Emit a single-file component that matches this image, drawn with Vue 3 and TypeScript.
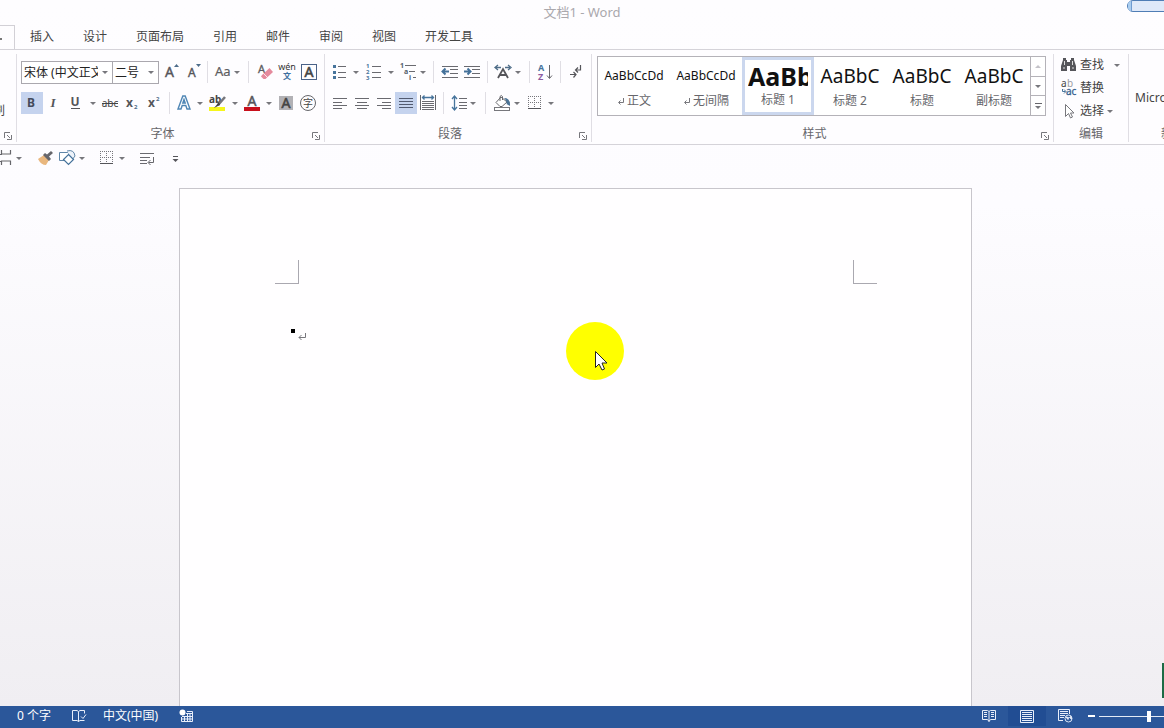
<script setup lang="ts">
import { ref } from 'vue'

interface Item {
  kind: 'button' | 'arrow' | 'sep' | 'gap'
  w: number
  icon?: string
  label?: string
  active?: boolean
}

const b = (icon: string, w: number, label: string, active = false): Item => ({ kind: 'button', icon, w, label, active })
const arrow = (w: number): Item => ({ kind: 'arrow', w, label: '更多选项' })
const sep = (w: number): Item => ({ kind: 'sep', w })
const gap = (w: number): Item => ({ kind: 'gap', w })

const ui = 'font-family="Noto Sans, Noto Sans CJK SC, sans-serif"'
const lines = (rows: number[][], color = '#6a6a70') =>
  rows.map(([x, y, w]) => `<path d="M${x} ${y}.5h${w}" stroke="${color}"/>`).join('')

const dots = (x: number, y: number) => {
  let out = `<path d="M${x} ${y + 12}.5h13" stroke="#55555a"/>`
  for (const o of [0, 6, 12]) {
    out += `<path d="M${x + o}.5 ${y}v12" stroke="#77777c" stroke-dasharray="1 1"/>`
    if (o < 12) out += `<path d="M${x} ${y + o}.5h13" stroke="#77777c" stroke-dasharray="1 1"/>`
  }
  return out
}

const icons: Record<string, string> = {
  grow: `<text x="5" y="16" font-size="14" fill="#55555a" stroke="#55555a" stroke-width=".4" ${ui}>A</text><path d="M14 6l2.500-3 2.500 3z" fill="#4d6c8a"/>`,
  shrink: `<text x="6" y="16" font-size="12" fill="#55555a" stroke="#55555a" stroke-width=".4" ${ui}>A</text><path d="M14 3h5l-2.500 3z" fill="#4d6c8a"/>`,
  casing: `<text x="4" y="15" font-size="13" fill="#5c5c60" stroke="#5c5c60" stroke-width=".2" ${ui}>Aa</text>`,
  eraser: `<text x="4" y="12" font-size="11" fill="#5c5c60" stroke="#5c5c60" stroke-width=".3" ${ui}>A</text><path d="M8 14l7.500-7 3.500 4-7.500 7h-2l-2.500-2.500z" fill="#e58a9d"/><path d="M9.500 12.500l4 4" stroke="#fff" stroke-width=".8"/>`,
  phonetic: `<text x="11" y="9" font-size="9" text-anchor="middle" fill="#333" ${ui}>wén</text><text x="11" y="18" font-size="8" font-weight="700" text-anchor="middle" fill="#3d6f9f" ${ui}>文</text>`,
  charBorder: `<rect x="3.500" y="3.500" width="15" height="15" fill="none" stroke="#4a6288"/><text x="11" y="16" font-size="14" text-anchor="middle" fill="#444" stroke="#444" stroke-width=".6" ${ui}>A</text>`,
  bold: `<text x="10" y="15" font-size="12" font-weight="700" text-anchor="middle" fill="#444b5c" ${ui}>B</text>`,
  italic: `<text x="10" y="15" font-size="13" font-style="italic" font-weight="700" text-anchor="middle" fill="#55555a" font-family="Liberation Serif, serif">I</text>`,
  underline: `<text x="10" y="14" font-size="12" font-weight="700" text-anchor="middle" fill="#55555a" ${ui}>U</text><path d="M6 16.500h9" stroke="#55555a"/>`,
  strike: `<text x="11" y="15" font-size="10" text-anchor="middle" fill="#444" ${ui}>abc</text><path d="M3 11.500h16" stroke="#444"/>`,
  sub: `<text x="5" y="15" font-size="12" font-weight="700" fill="#55555a" ${ui}>x</text><text x="13" y="17" font-size="6" font-weight="700" fill="#4d6c8a" ${ui}>2</text>`,
  sup: `<text x="5" y="15" font-size="12" font-weight="700" fill="#55555a" ${ui}>x</text><text x="13" y="9" font-size="6" font-weight="700" fill="#4d6c8a" ${ui}>2</text>`,
  effect: `<path d="M5 17l4.800-13h2.400l4.800 13h-3l-1.200-3.500h-3.600l-1.200 3.500zM9.800 11h2.400l-1.200-3.600z" fill="#fff" stroke="#4f86b5" stroke-width="1.400"/>`,
  highlight: `<rect x="3" y="15" width="16" height="4" fill="#f6f61c"/><text x="3" y="11" font-size="10" font-weight="700" fill="#444" ${ui}>ab</text><path d="M19 5l-7 8" stroke="#77777c" stroke-width="2.500"/><path d="M13 10l-5 6 6-3z" fill="#444"/>`,
  fontColor: `<text x="11" y="14" font-size="14" text-anchor="middle" fill="#55555a" stroke="#55555a" stroke-width=".5" ${ui}>A</text><rect x="3" y="15" width="16" height="4" fill="#c8101c"/>`,
  shade: `<rect x="4" y="4" width="14" height="14" fill="#b2b1b5"/><text x="11" y="16" font-size="14" text-anchor="middle" fill="#444" stroke="#444" stroke-width=".6" ${ui}>A</text>`,
  enclose: `<circle cx="11" cy="11" r="7.500" fill="none" stroke="#66666b"/><text x="11" y="15" font-size="10" text-anchor="middle" fill="#444" ${ui}>字</text>`,
  bullets: lines([[9, 5, 8], [9, 11, 8], [9, 16, 8]]) + '<path d="M4 4h3v3h-3zM4 10h3v3h-3zM4 15h3v3h-3z" fill="#47749c"/>',
  numbers: lines([[9, 5, 9], [9, 11, 9], [9, 16, 9]]) + `<g font-size="6" font-weight="700" fill="#47749c" ${ui}><text x="3" y="7">1</text><text x="3" y="13">2</text><text x="3" y="19">3</text></g>`,
  multi: lines([[9, 4, 11], [13, 10, 6], [17, 16, 3]]) + `<g font-size="7" font-weight="700" fill="#55606c" ${ui}><text x="4" y="7">1</text><text x="8" y="13">a</text><text x="13" y="19">i</text></g>`,
  outdent: lines([[3, 5, 16], [11, 8, 8], [11, 12, 8], [3, 16, 16]]) + '<path d="M3 10.500h7M6.500 7.500l-3 3 3 3" fill="none" stroke="#44719a" stroke-width="2"/>',
  indent: lines([[3, 5, 16], [11, 8, 8], [11, 12, 8], [3, 16, 16]]) + '<path d="M3 10.500h6M6.500 7.500l3 3-3 3" fill="none" stroke="#44719a" stroke-width="2"/>',
  asian: `<path d="M6 17l5-9 5 9M8 14h6" fill="none" stroke="#55555a" stroke-width="1.800"/><path d="M4 6.500h5M6 4l-3 2.500 3 2.500M13 6.500h5M16 4l3 2.500-3 2.500" fill="none" stroke="#4f6d88" stroke-width="1.300"/>`,
  sort: `<text x="4" y="10" font-size="9" font-weight="700" fill="#47749c" ${ui}>A</text><text x="4" y="19" font-size="9" font-weight="700" fill="#8b5aa0" ${ui}>Z</text><path d="M15.500 4v13M13 14.500l2.500 3 2.500-3" fill="none" stroke="#66666b"/>`,
  marks: '<path d="M15.500 4v5h-5M13 6.500l-2.500 2.500 2.500 2.500M5 13.500h6M8.500 11l2.500 2.500-2.500 3" fill="none" stroke="#55555a" stroke-width="1.200"/>',
  left: lines([[4, 6, 14], [4, 10, 9], [4, 13, 14], [4, 16, 9]]),
  center: lines([[4, 6, 14], [6, 10, 10], [4, 13, 14], [6, 16, 10]]),
  right: lines([[4, 6, 14], [9, 10, 9], [4, 13, 14], [9, 16, 9]]),
  justify: lines([[4, 6, 14], [4, 9, 14], [4, 12, 14], [4, 15, 14]], '#525a70'),
  distribute: lines([[5, 9, 12], [5, 11, 12], [5, 13, 12], [5, 15, 12], [5, 17, 12]]) + '<path d="M3.500 3v15M18.500 3v15" stroke="#66666b"/><path d="M5 5.500h12M7.500 3.500l-2 2 2 2M14.500 3.500l2 2-2 2" fill="none" stroke="#47749c" stroke-width="1.300"/>',
  spacing: lines([[11, 6, 8], [11, 10, 8], [11, 13, 8], [11, 16, 8]]) + '<path d="M6.500 4.500v13M4 7l2.500-3 2.500 3M4 15l2.500 3 2.500-3" fill="none" stroke="#47749c" stroke-width="1.300"/>',
  fill: '<rect x="2.500" y="15.500" width="15" height="3" fill="#fff" stroke="#77777c"/><path d="M9 5l6 5-5 4.500h-2l-4-4z" fill="#fff" stroke="#66666b"/><path d="M8 9V4.500q1.500-2 2.500 0V8" fill="none" stroke="#66666b"/><path d="M12 6q6.500 0 6 8l-3.500-2q1-3-2.500-6z" fill="#4b7395"/>',
  borders: dots(5, 4),
  find: '<path d="M5 4h3v2h1v2h3V6h1V4h3v2l2 6v5h-6v-5h-3v5H3v-5l2-6z" fill="#55555a"/><path d="M6.500 7v4M14.500 7v4M5 14h2M14 14h2" stroke="#ddd"/>',
  replace: `<g font-size="10" ${ui}><text x="3" y="10" fill="#444">a</text><text x="9" y="10" fill="#9a9a9f">b</text><text x="8" y="18" fill="#35618f" stroke="#35618f" stroke-width=".3">ac</text></g><path d="M4.500 12v2.500h3M6 12.500l2 2-2 2" fill="none" stroke="#47749c"/>`,
  select: '<path d="M7.500 4.500v12l3-3 2 4.500 2-1-2-4h3.500z" fill="#fff" stroke="#77777c"/>',
  header: '<path d="M4.500 3v4h9V3M4.500 18v-4h9v4M0 7.500h5M0 14.500h5" fill="none" stroke="#66666b" stroke-width="1.200"/>',
  brush: '<path d="M4 12l6-4 5 5-3 5q-5 0-8-6z" fill="#e9b77e"/><path d="M9 8l6 6 2-2-2-2.500L19 6l-2-2-4 3.500L11 6z" fill="#66666b"/>',
  shapes: '<path d="M3.500 5.500h9v8h-9z" fill="#fff" stroke="#5f86a8"/><path d="M11 4q7-2 8 5l-3 4" fill="#eef3fa" stroke="#5f86a8"/><path d="M12.500 7.500l5 5-5 5-5-5z" fill="#fff" stroke="#44719a" stroke-width="1.200"/>',
  wrap: lines([[5, 6, 14], [5, 10, 10], [5, 13, 7], [5, 16, 7]]) + '<path d="M18.500 10v5.500h-5M15.500 13l-2.500 2.500 2.500 2.500" fill="none" stroke="#66666b"/>',
  more: '<path d="M9 9.500h5" stroke="#55555a"/><path d="M8.500 12h6l-3 3z" fill="#55555a"/>',
}

const fontTop: Item[] = [
  gap(1), b('grow', 22, '增大字号'), b('shrink', 22, '减小字号'), sep(7), b('casing', 21, '更改大小写'), arrow(10), sep(12),
  b('eraser', 22, '清除格式'), b('phonetic', 22, '拼音指南'), b('charBorder', 22, '字符边框'),
]
const fontBottom: Item[] = [
  b('bold', 22, '加粗', true), b('italic', 22, '倾斜'), b('underline', 22, '下划线'), arrow(12), b('strike', 22, '删除线'),
  b('sub', 22, '下标'), b('sup', 22, '上标'), sep(8), b('effect', 22, '文本效果'), arrow(9), b('highlight', 26, '突出显示'),
  arrow(9), b('fontColor', 26, '字体颜色'), arrow(8), b('shade', 26, '字符底纹'), b('enclose', 18, '带圈字符'),
]
const paraTop: Item[] = [
  b('bullets', 22, '项目符号'), arrow(10), b('numbers', 26, '编号'), arrow(8), b('multi', 24, '多级列表'), arrow(8), sep(12),
  b('outdent', 22, '减少缩进量'), b('indent', 22, '增加缩进量'), sep(8), b('asian', 24, '中文版式'), arrow(6), sep(16),
  b('sort', 16, '排序'), sep(14), b('marks', 18, '显示编辑标记'),
]
const paraBottom: Item[] = [
  b('left', 22, '左对齐'), b('center', 22, '居中'), b('right', 22, '右对齐'), b('justify', 22, '两端对齐', true), b('distribute', 22, '分散对齐'),
  sep(9), b('spacing', 22, '行距'), arrow(6), sep(18), b('fill', 18, '底纹'), arrow(10), b('borders', 24, '边框'), arrow(10),
]
const quick: Item[] = [
  b('header', 15, '页眉和页脚'), arrow(8), gap(11), b('brush', 22, '格式刷'), b('shapes', 22, '形状'), arrow(8), gap(9),
  b('borders', 22, '边框'), arrow(10), gap(8), b('wrap', 22, '换行'), gap(7), b('more', 22, '自定义快速访问工具栏'),
]

const groups = [
  { name: '字体', cls: 'font', top: fontTop, bottom: fontBottom },
  { name: '段落', cls: 'para', top: paraTop, bottom: paraBottom },
]
const tabs = ['插入', '设计', '页面布局', '引用', '邮件', '审阅', '视图', '开发工具']
const styles = [
  { sample: 'AaBbCcDd', name: '正文', size: 'small', mark: true },
  { sample: 'AaBbCcDd', name: '无间隔', size: 'small', mark: true },
  { sample: 'AaBb', name: '标题 1', size: 'huge', mark: false },
  { sample: 'AaBbC', name: '标题 2', size: 'big', mark: false },
  { sample: 'AaBbC', name: '标题', size: 'big', mark: false },
  { sample: 'AaBbC', name: '副标题', size: 'big', mark: false },
]
const edits = [
  { icon: 'find', name: '查找', cls: 'far' },
  { icon: 'replace', name: '替换', cls: '' },
  { icon: 'select', name: '选择', cls: 'near' },
]
const chosen = ref(2)
const zoom = ref(50)
</script>

<template>
  <div class="app">
    <header class="title">文档1 - Word</header>
    <nav class="tabs">
      <button class="tab home" aria-label="开始"><i></i></button>
      <button v-for="t in tabs" :key="t" class="tab">{{ t }}</button>
    </nav>

    <div class="ribbon">
      <section class="group clip">
        <div class="rows"><span class="cut">刷</span></div>
        <div class="foot"><span></span>
          <button class="launch" aria-label="剪贴板设置"><svg width="8" height="8"><path d="M.5 6V.5H6M3 3l3 3M7.500 3v4.500H3" /></svg></button>
        </div>
      </section>

      <section v-for="g in groups" :key="g.name" class="group" :class="g.cls">
        <div class="rows">
          <div v-for="(row, r) in [g.top, g.bottom]" :key="r" class="row">
            <template v-if="g.cls === 'font' && r === 0">
              <span class="combo family"><select aria-label="字体"><option>宋体 (中文正文)</option></select><i class="tri"></i></span>
              <span class="combo size"><select aria-label="字号"><option>二号</option></select><i class="tri"></i></span>
            </template>
            <template v-for="(it, i) in row" :key="i">
              <button v-if="it.kind === 'button'" class="tool" :class="{ active: it.active }" :style="{ width: it.w + 'px' }" :aria-label="it.label">
                <svg width="22" height="22" viewBox="0 0 22 22" v-html="icons[it.icon!]"></svg>
              </button>
              <button v-else-if="it.kind === 'arrow'" class="tool" :style="{ width: it.w + 'px' }" :aria-label="it.label"><i class="tri"></i></button>
              <span v-else :class="it.kind" :style="{ width: it.w + 'px' }"></span>
            </template>
          </div>
        </div>
        <div class="foot"><span>{{ g.name }}</span>
          <button class="launch" :aria-label="g.name + '设置'"><svg width="8" height="8"><path d="M.5 6V.5H6M3 3l3 3M7.500 3v4.500H3" /></svg></button>
        </div>
      </section>

      <section class="group styles">
        <div class="gallery">
          <button v-for="(s, i) in styles" :key="i" class="style" :class="{ chosen: chosen === i }" @click="chosen = i">
            <span class="sample" :class="s.size">{{ s.sample }}</span>
            <span class="name"><svg v-if="s.mark" width="8" height="8"><path d="M6.500 1v4.500H2M3.500 3.500l-2 2 2 2" /></svg>{{ s.name }}</span>
          </button>
          <div class="scroller">
            <button aria-label="上一行" class="dim"><i class="tri up"></i></button>
            <button aria-label="下一行"><i class="tri"></i></button>
            <button aria-label="其他样式"><i class="bar"></i><i class="tri"></i></button>
          </div>
        </div>
        <div class="foot"><span>样式</span>
          <button class="launch" aria-label="样式设置"><svg width="8" height="8"><path d="M.5 6V.5H6M3 3l3 3M7.500 3v4.500H3" /></svg></button>
        </div>
      </section>

      <section class="group edit">
        <div class="rows">
          <button v-for="e in edits" :key="e.name" class="command" :class="e.cls">
            <svg width="22" height="22" viewBox="0 0 22 22" v-html="icons[e.icon]"></svg>{{ e.name }}<i v-if="e.cls" class="tri"></i>
          </button>
        </div>
        <div class="foot"><span>编辑</span></div>
      </section>

      <section class="group extra">
        <div class="rows">Microsoft</div>
        <div class="foot">新建组</div>
      </section>
    </div>

    <div class="quick">
      <template v-for="(it, i) in quick" :key="i">
        <button v-if="it.kind === 'button'" class="tool" :style="{ width: it.w + 'px' }" :aria-label="it.label">
          <svg width="22" height="22" viewBox="0 0 22 22" v-html="icons[it.icon!]"></svg>
        </button>
        <button v-else-if="it.kind === 'arrow'" class="tool" :style="{ width: it.w + 'px' }" :aria-label="it.label"><i class="tri"></i></button>
        <span v-else class="gap" :style="{ width: it.w + 'px' }"></span>
      </template>
    </div>

    <main class="work">
      <article class="page">
        <div class="corners"><span class="corner l"></span><span class="corner r"></span></div>
        <p class="line"><i class="dot"></i><svg width="9" height="9"><path d="M7.500 0v4.500H1M3.500 2L1 4.500 3.500 7" /></svg></p>
        <div class="spot">
          <svg width="14" height="20" viewBox="0 0 14 20"><path d="M.5.5v16l3.500-3.500 3 6 2.500-1-2.500-6h5z" fill="#fff" stroke="#222" /></svg>
        </div>
      </article>
    </main>

    <footer class="status">
      <span class="words">0 个字</span>
      <button class="stat" aria-label="校对">
        <svg width="16" height="14" viewBox="0 0 16 14"><path d="M7.500 2.500v10M7.500 2.500L6 1.500H1.500v10H6l1.500 1 1.500-1h4.500M7.500 2.500l1.500-1h4.500v3M10 7.500l2 2 3-4" /></svg>
      </button>
      <span class="lang">中文(中国)</span>
      <button class="stat macro" aria-label="宏录制">
        <svg width="14" height="14" viewBox="0 0 14 14"><circle cx="3.500" cy="3.500" r="3" fill="#fff" stroke="none" /><path d="M8 2.500h5.500v10h-11V8M7 4.500h6M3 7.500h10M3 10h10M5.500 7.500v5M8.500 5v7M11 5v7" /></svg>
      </button>
      <span class="fill"></span>
      <button class="view" aria-label="阅读视图">
        <svg width="14" height="12" viewBox="0 0 14 12"><path d="M7 1.500v10M7 1.500L5.500.5h-5v9h5L7 11.500l1.500-2h5v-9h-5zM2 2.500h3M2 4.500h3M2 6.500h3M9 2.500h3M9 4.500h3M9 6.500h3" /></svg>
      </button>
      <button class="view on" aria-label="页面视图">
        <svg width="14" height="13" viewBox="0 0 14 13"><path d="M.5.5h13v12H.5zM2 2.500h10M2 4.500h10M2 6.500h10M2 8.500h10M2 10.500h10" /></svg>
      </button>
      <button class="view" aria-label="Web 版式">
        <svg width="15" height="14" viewBox="0 0 15 14"><path d="M5 11.500H.5V.5h11V5M2 2.500h8M2 4.500h8M2 6.500h5M2 8.500h4" /><circle cx="10.500" cy="9.500" r="3.500" fill="#2b579a" stroke="#dce6f6" /><path d="M8 8l2.500.5-.5 2zM11.500 8.500l1.500-1 .5 2.500z" fill="#dce6f6" /></svg>
      </button>
      <button class="minus" aria-label="缩小"></button>
      <input v-model="zoom" class="zoom" type="range" min="0" max="100" aria-label="显示比例" />
    </footer>

    <div class="pill"><i></i></div>
    <div class="edge"></div>
  </div>
</template>

<style>
body {
  margin: 0;
  overflow: hidden;
}
</style>

<style scoped>
.app {
  position: relative;
  display: flex;
  flex-direction: column;
  height: 100vh;
  overflow: hidden;
  background: linear-gradient(#fefdff 0, #fdfcff 28%, #f0eef2 97%);
  color: #444;
  font: 12px/16px "Noto Sans", "Noto Sans CJK SC", sans-serif;
}
button {
  display: flex;
  align-items: center;
  justify-content: center;
  flex: none;
  margin: 0;
  padding: 0;
  border: 0;
  background: none;
  color: inherit;
  font: inherit;
}
svg {
  flex: none;
  display: block;
}
.title {
  height: 24px;
  font-size: 13px;
  line-height: 24px;
  text-align: center;
  color: #aaa8ad;
}
.tabs {
  display: flex;
  gap: 29px;
  height: 25px;
}
.tab {
  white-space: nowrap;
}
.home {
  justify-content: flex-start;
  width: 15px;
  height: 26px;
  margin: 1px -14px 0 0;
  border: solid #d2d0d6;
  border-width: 1px 1px 0 0;
}
.home i {
  width: 2px;
  height: 2px;
  background: #777;
}
.ribbon {
  display: flex;
  height: 94px;
  flex: none;
  border: solid #d5d3d9;
  border-width: 1px 0;
  background: #fefdff;
}
.group {
  display: flex;
  flex-direction: column;
  box-sizing: border-box;
  flex: none;
  margin: 4px 0 2px;
  padding-top: 7px;
  border-right: 1px solid #e0dee4;
}
.clip {
  width: 17px;
}
.font {
  width: 308px;
}
.para {
  width: 267px;
}
.styles {
  flex: 1;
  min-width: 0;
  padding-top: 2px;
}
.edit {
  width: 75px;
  padding-top: 0;
}
.extra {
  width: 35px;
  border: 0;
  overflow: hidden;
  white-space: nowrap;
}
.rows {
  display: flex;
  flex-direction: column;
  gap: 9px;
  flex: 1;
  padding-left: 4px;
}
.clip .rows {
  padding: 0;
  overflow: hidden;
}
.cut {
  margin: 42px 0 0 -7px;
}
.row {
  display: flex;
  height: 22px;
}
.foot {
  display: flex;
  align-items: center;
  height: 16px;
  color: #66666b;
}
.foot > span {
  flex: 1;
  text-align: center;
}
.launch {
  width: 16px;
  height: 16px;
  padding-top: 4px;
}
.launch svg,
.name svg,
.line svg {
  fill: none;
  stroke: #77777c;
}
.tool {
  height: 22px;
}
.active {
  background: #c5d3ee;
}
.gap {
  flex: none;
}
.sep {
  display: flex;
  justify-content: center;
  flex: none;
}
.sep::before {
  content: "";
  width: 1px;
  height: 22px;
  background: #e0dee4;
}
.tri {
  flex: none;
  border: solid transparent;
  border-width: 3px 3px 0;
  border-top-color: #77777c;
}
.up {
  border-width: 0 3px 3px;
  border-bottom-color: #c4c2c8;
}
.combo {
  display: flex;
  align-items: center;
  box-sizing: border-box;
  height: 23px;
  padding-right: 4px;
  border: 1px solid #aaa8ae;
  background: #fff;
}
.combo select {
  flex: 1;
  min-width: 0;
  height: 20px;
  padding: 0 0 0 2px;
  border: 0;
  outline: 0;
  appearance: none;
  background: none;
  color: #222;
  font: inherit;
  text-overflow: clip;
}
.combo .tri {
  margin-left: 4px;
}
.family {
  width: 92px;
}
.size {
  width: 46px;
  border-left: 0;
}
.gallery {
  display: flex;
  height: 58px;
  margin: 0 7px 0 5px;
  border: 1px solid #b4b2b8;
  background: #fff;
}
.styles .foot {
  margin-top: auto;
}
.style {
  justify-content: flex-start;
  flex: 1;
  min-width: 0;
  flex-direction: column;
  box-sizing: border-box;
  padding: 2px 3px 0;
  overflow: hidden;
}
.chosen {
  padding: 0;
  border: 3px solid #cbd7ee;
}
.sample {
  display: flex;
  align-items: center;
  justify-content: center;
  width: 64px;
  height: 34px;
  overflow: hidden;
  color: #111;
  font-family: "Noto Sans", sans-serif;
  white-space: nowrap;
}
.small {
  font-size: 12px;
}
.big {
  font-size: 19px;
}
.huge {
  justify-content: flex-start;
  width: 60px;
  height: 32px;
  font-size: 25px;
  font-weight: 700;
}
.name {
  display: flex;
  align-items: center;
  gap: 2px;
  height: 16px;
  color: #66666b;
}
.scroller {
  display: flex;
  flex-direction: column;
  width: 14px;
  border-left: 1px solid #b4b2b8;
}
.scroller button {
  flex: 1;
  flex-direction: column;
  gap: 2px;
}
.scroller button + button {
  border-top: 1px solid #b4b2b8;
}
.bar {
  width: 7px;
  height: 1px;
  background: #66666b;
}
.edit .rows {
  gap: 1px;
}
.command {
  justify-content: flex-start;
  height: 22px;
}
.far .tri {
  margin-left: 10px;
}
.near .tri {
  margin-left: 3px;
}
.extra .rows {
  padding: 29px 0 0 6px;
}
.extra .foot {
  padding-left: 32px;
}
.quick {
  display: flex;
  align-items: center;
  flex: none;
  height: 26px;
  margin-bottom: 1px;
}
.work {
  display: flex;
  justify-content: center;
  flex: 1;
  min-height: 0;
  padding: 16px 13px 0 0;
}
.page {
  position: relative;
  box-sizing: border-box;
  width: 793px;
  padding: 71px 94px 0 95px;
  border: 1px solid #c8c6cc;
  border-bottom: 0;
  background: #fffeff;
}
.corners {
  display: flex;
  justify-content: space-between;
}
.corner {
  box-sizing: border-box;
  width: 24px;
  height: 24px;
  border: solid #aaa8b0;
  border-width: 0 0 1px;
}
.l {
  border-right-width: 1px;
}
.r {
  border-left-width: 1px;
}
.line {
  display: flex;
  gap: 3px;
  margin: 45px 0 0 16px;
}
.line svg {
  margin-top: 4px;
}
.dot {
  width: 4px;
  height: 4px;
  background: #000;
}
.spot {
  position: absolute;
  left: 386px;
  top: 133px;
  width: 58px;
  height: 58px;
  border-radius: 50%;
  background: #ff0;
}
.spot svg {
  margin: 29px 0 0 29px;
}
.status {
  display: flex;
  align-items: center;
  flex: none;
  box-sizing: border-box;
  height: 22px;
  padding: 0 0 2px 17px;
  background: #2b579a;
  color: #fff;
  white-space: nowrap;
}
.status svg {
  fill: none;
  stroke: #e8eefa;
}
.words {
  width: 54px;
}
.stat {
  width: 16px;
}
.macro {
  width: 14px;
}
.lang {
  width: 76px;
  padding-left: 16px;
}
.fill {
  flex: 1;
}
.view {
  width: 38px;
  height: 20px;
}
.on {
  background: #214d93;
}
.minus {
  width: 7px;
  height: 2px;
  margin: 0 4px;
  background: #fff;
}
.zoom {
  flex: none;
  width: 100px;
  height: 16px;
  margin: 0 -35px 0 0;
  appearance: none;
  background: linear-gradient(#e4ebf6, #e4ebf6) center / 100% 1px no-repeat;
}
.zoom::-webkit-slider-thumb {
  appearance: none;
  width: 4px;
  height: 11px;
  background: #fff;
}
.pill {
  position: absolute;
  top: 0;
  right: -12px;
  box-sizing: border-box;
  width: 49px;
  height: 12px;
  border: 1px solid #4f7db5;
  border-radius: 6px;
  background: #dfe9f9;
}
.pill i {
  display: block;
  width: 3px;
  height: 10px;
  border-right: 1px solid #6f9bd0;
  border-radius: 5px 0 0 5px;
  background: #a9cdf0;
}
.edge {
  position: absolute;
  right: 0;
  bottom: 30px;
  width: 2px;
  height: 35px;
  background: #1d6b45;
}
</style>
